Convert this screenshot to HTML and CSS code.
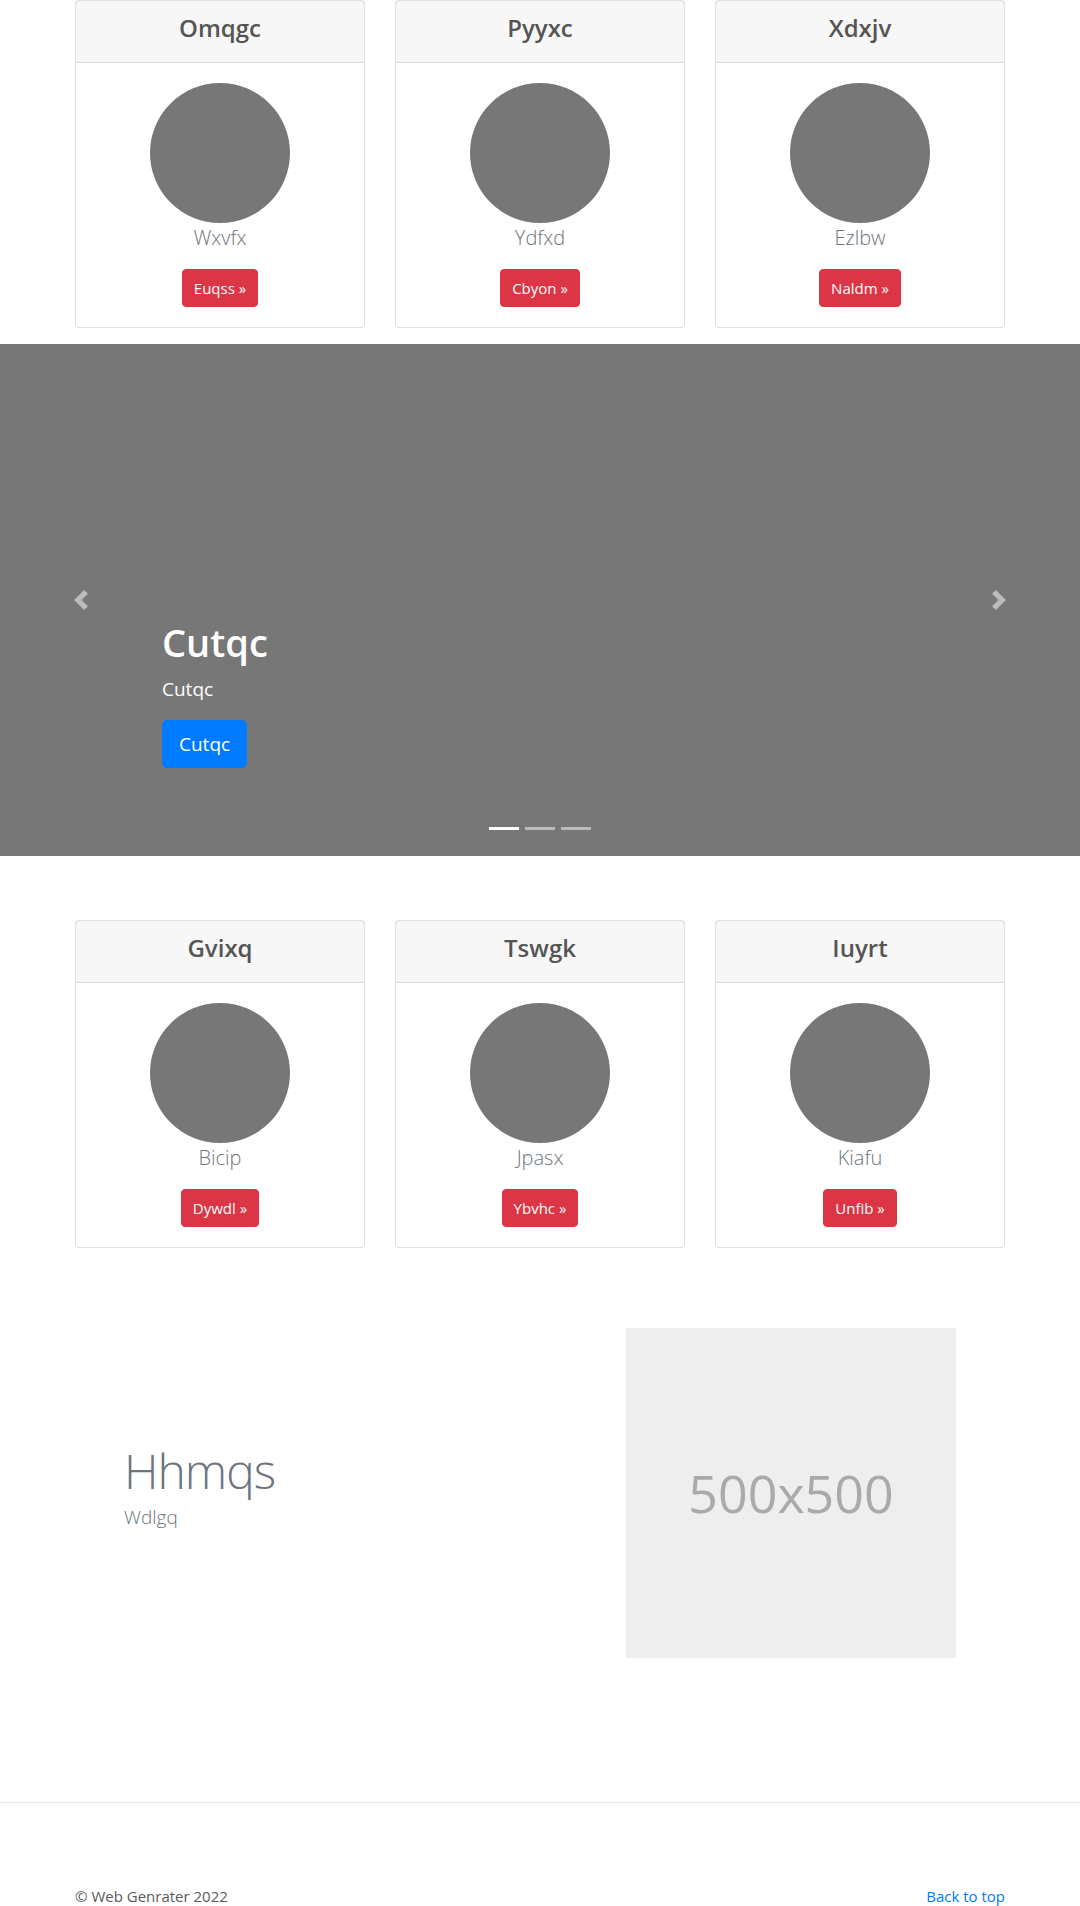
FILE: index.html
```html
<!DOCTYPE html>
<html lang="en">
<head>
<meta charset="utf-8">
<title>Web Genrater</title>
<link rel="stylesheet" href="styles.css">
</head>
<body>
<main>
  <section class="container cards cards-top">
    <div class="card">
      <div class="card-header"><h4>Omqgc</h4></div>
      <div class="card-body">
        <div class="avatar"></div>
        <p class="lead">Wxvfx</p>
        <a class="btn btn-danger" href="#">Euqss &raquo;</a>
      </div>
    </div>
    <div class="card">
      <div class="card-header"><h4>Pyyxc</h4></div>
      <div class="card-body">
        <div class="avatar"></div>
        <p class="lead">Ydfxd</p>
        <a class="btn btn-danger" href="#">Cbyon &raquo;</a>
      </div>
    </div>
    <div class="card">
      <div class="card-header"><h4>Xdxjv</h4></div>
      <div class="card-body">
        <div class="avatar"></div>
        <p class="lead">Ezlbw</p>
        <a class="btn btn-danger" href="#">Naldm &raquo;</a>
      </div>
    </div>
  </section>

  <section class="carousel">
    <ol class="carousel-indicators">
      <li class="active"></li>
      <li></li>
      <li></li>
    </ol>
    <a class="carousel-control prev" href="#" aria-label="Previous">
      <svg width="20" height="20" viewBox="0 0 8 8"><path fill="#fff" d="M5.25 0l-4 4 4 4 1.5-1.5L4.25 4l2.5-2.5L5.25 0z"/></svg>
    </a>
    <div class="carousel-caption">
      <h1>Cutqc</h1>
      <p>Cutqc</p>
      <a class="btn btn-lg btn-primary" href="#">Cutqc</a>
    </div>
    <a class="carousel-control next" href="#" aria-label="Next">
      <svg width="20" height="20" viewBox="0 0 8 8"><path fill="#fff" d="M2.75 0l-1.5 1.5L3.75 4l-2.5 2.5L2.75 8l4-4-4-4z"/></svg>
    </a>
  </section>

  <section class="container cards">
    <div class="card">
      <div class="card-header"><h4>Gvixq</h4></div>
      <div class="card-body">
        <div class="avatar"></div>
        <p class="lead">Bicip</p>
        <a class="btn btn-danger" href="#">Dywdl &raquo;</a>
      </div>
    </div>
    <div class="card">
      <div class="card-header"><h4>Tswgk</h4></div>
      <div class="card-body">
        <div class="avatar"></div>
        <p class="lead">Jpasx</p>
        <a class="btn btn-danger" href="#">Ybvhc &raquo;</a>
      </div>
    </div>
    <div class="card">
      <div class="card-header"><h4>Iuyrt</h4></div>
      <div class="card-body">
        <div class="avatar"></div>
        <p class="lead">Kiafu</p>
        <a class="btn btn-danger" href="#">Unfib &raquo;</a>
      </div>
    </div>
  </section>

  <section class="container featurette">
    <div class="featurette-text">
      <h2 class="featurette-heading">Hhmqs</h2>
      <p class="featurette-lead">Wdlgq</p>
    </div>
    <div class="placeholder"><span>500x500</span></div>
  </section>
</main>

<footer class="footer">
  <div class="container footer-inner">
    <p>&copy; Web Genrater 2022</p>
    <p><a href="#">Back to top</a></p>
  </div>
</footer>
</body>
</html>
```

FILE: styles.css
```css
* {
  box-sizing: border-box;
}

html, body {
  margin: 0;
  padding: 0;
}

body {
  font-family: "Open Sans", "Noto Sans", "Liberation Sans", sans-serif;
  font-size: 16px;
  line-height: 1.5;
  color: #5a5a5a;
  background: #fff;
}

a {
  color: #007bff;
  text-decoration: none;
}

.container {
  width: 960px;
  margin: 0 auto;
  padding: 0 15px;
}

/* ---------- cards ---------- */
.cards {
  display: grid;
  grid-template-columns: repeat(3, 290px);
  column-gap: 30px;
  margin-bottom: 16px;
}

.card {
  border: 1px solid rgba(0, 0, 0, 0.125);
  border-radius: 4px;
  background: #fff;
  text-align: center;
  overflow: hidden;
}

.card-header {
  background: rgba(0, 0, 0, 0.03);
  border-bottom: 1px solid rgba(0, 0, 0, 0.125);
  padding: 12px 20px 4px;
  height: 62px;
}

.card-header h4 {
  margin: 0;
  font-size: 24px;
  line-height: 30px;
  font-weight: 600;
  color: #555;
}

.card-body {
  padding: 20px;
  display: flex;
  flex-direction: column;
  align-items: center;
}

.avatar {
  width: 140px;
  height: 140px;
  border-radius: 50%;
  background: #777;
}

.lead {
  margin: 0 0 16px;
  font-size: 20px;
  line-height: 30px;
  font-weight: 300;
  color: #6c757d;
}

.btn {
  display: inline-block;
  font-size: 15px;
  line-height: 24px;
  padding: 6px 11px;
  border-radius: 4px;
  border: 1px solid transparent;
  color: #fff;
}

.btn-danger {
  background: #dc3545;
  border-color: #dc3545;
}

.btn-primary {
  background: #007bff;
  border-color: #007bff;
}

.btn-lg {
  font-size: 19px;
  line-height: 30px;
  padding: 8px 16px;
  border-radius: 5px;
}

/* ---------- carousel ---------- */
.carousel {
  position: relative;
  height: 512px;
  background: #777;
  margin-bottom: 64px;
  overflow: hidden;
}

.carousel-control {
  position: absolute;
  top: 0;
  bottom: 0;
  width: 15%;
  display: flex;
  align-items: center;
  justify-content: center;
  opacity: 0.5;
}

.carousel-control.prev {
  left: 0;
}

.carousel-control.next {
  right: 0;
}

.carousel-control svg {
  display: block;
}

.carousel-caption {
  position: absolute;
  left: 15%;
  right: 15%;
  bottom: 88px;
  color: #fff;
  text-align: left;
  display: flex;
  flex-direction: column;
  align-items: flex-start;
}

.carousel-caption h1 {
  margin: 0 0 8px;
  font-size: 38px;
  line-height: 48px;
  font-weight: 600;
}

.carousel-caption p {
  margin: 0 0 16px;
  font-size: 19px;
  line-height: 30px;
}

.carousel-indicators {
  position: absolute;
  left: 0;
  right: 0;
  bottom: 16px;
  margin: 0;
  padding: 0;
  list-style: none;
  display: flex;
  justify-content: center;
}

.carousel-indicators li {
  width: 30px;
  height: 3px;
  margin: 10px 3px;
  background: #fff;
  opacity: 0.5;
}

.carousel-indicators li.active {
  opacity: 1;
}

/* ---------- featurette ---------- */
.featurette {
  display: flex;
  align-items: center;
  justify-content: space-between;
  padding: 64px 64px 0;
}

.featurette-text {
  padding-bottom: 8px;
}

.featurette-heading {
  margin: 0 0 6px;
  font-size: 48px;
  line-height: 50px;
  font-weight: 300;
  letter-spacing: -1px;
  color: #6c757d;
}

.featurette-lead {
  margin: 0;
  font-size: 19px;
  line-height: 30px;
  font-weight: 300;
  color: #6c757d;
}

.placeholder {
  width: 330px;
  height: 330px;
  background: #eee;
  display: flex;
  align-items: center;
  justify-content: center;
  font-size: 52px;
  color: #aaa;
  font-weight: 400;
}

/* ---------- footer ---------- */
.footer {
  margin-top: 144px;
  border-top: 1px solid #e5e5e5;
  padding-top: 81px;
}

.footer-inner {
  display: flex;
  justify-content: space-between;
}

.footer-inner p {
  margin: 0 0 16px;
  font-size: 15px;
  line-height: 24px;
}
```
